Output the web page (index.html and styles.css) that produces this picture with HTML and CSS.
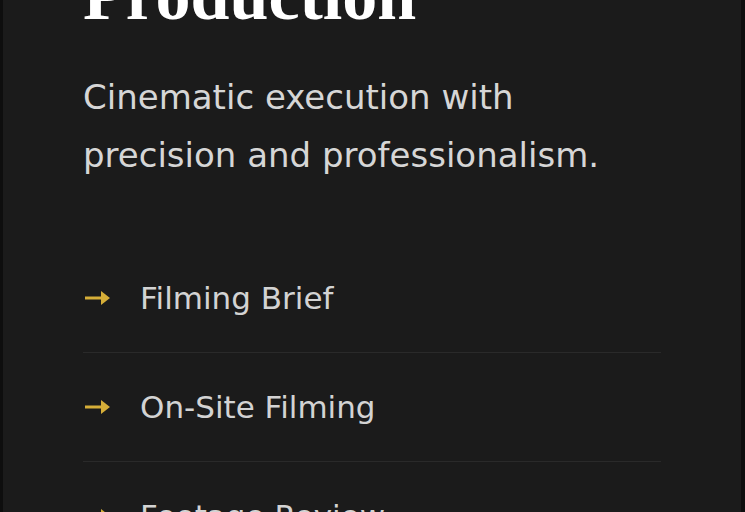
FILE: index.html
```html
<!DOCTYPE html>
<html lang="en">
<head>
<meta charset="utf-8">
<title>Production</title>
<link rel="stylesheet" href="styles.css">
</head>
<body>
<section class="card">
  <h2 class="title">Production</h2>
  <p class="lead">Cinematic execution with precision and professionalism.</p>
  <ul class="steps">
    <li class="step">
      <svg class="arrow" viewBox="0 0 25 16" width="25" height="16" aria-hidden="true"><rect x="0" y="6.5" width="18" height="3" fill="currentColor"/><polygon points="16,1 25,8 16,15" fill="currentColor"/></svg>
      <span class="step-label">Filming Brief</span>
    </li>
    <li class="step">
      <svg class="arrow" viewBox="0 0 25 16" width="25" height="16" aria-hidden="true"><rect x="0" y="6.5" width="18" height="3" fill="currentColor"/><polygon points="16,1 25,8 16,15" fill="currentColor"/></svg>
      <span class="step-label">On-Site Filming</span>
    </li>
    <li class="step">
      <svg class="arrow" viewBox="0 0 25 16" width="25" height="16" aria-hidden="true"><rect x="0" y="6.5" width="18" height="3" fill="currentColor"/><polygon points="16,1 25,8 16,15" fill="currentColor"/></svg>
      <span class="step-label">Footage Review</span>
    </li>
  </ul>
</section>
</body>
</html>
```

FILE: styles.css
```css
html, body {
  margin: 0;
  padding: 0;
  background: #0e0e0e;
  overflow: hidden;
}
.card {
  margin: 0 4px 0 3px;
  background: #1b1b1b;
  padding: 0 80px;
  height: 512px;
  box-sizing: border-box;
  font-family: "DejaVu Sans", sans-serif;
  overflow: hidden;
}
.title {
  margin: -44px 0 0;
  font-family: "Liberation Serif", serif;
  font-weight: 700;
  font-size: 70px;
  line-height: 80px;
  color: #ffffff;
}
.lead {
  margin: 32px 0 0;
  font-size: 34px;
  line-height: 58px;
  color: #d6d6d6;
}
.steps {
  list-style: none;
  margin: 60px 0 0;
  padding: 0;
}
.step {
  display: flex;
  align-items: center;
  gap: 30px;
  height: 108px;
  border-bottom: 1px solid #2a2a2a;
  color: #d3d3d3;
}
.arrow {
  color: #d6ae38;
  flex: none;
  margin-left: 2px;
}
.step-label {
  font-size: 31px;
  line-height: 34px;
}
```
